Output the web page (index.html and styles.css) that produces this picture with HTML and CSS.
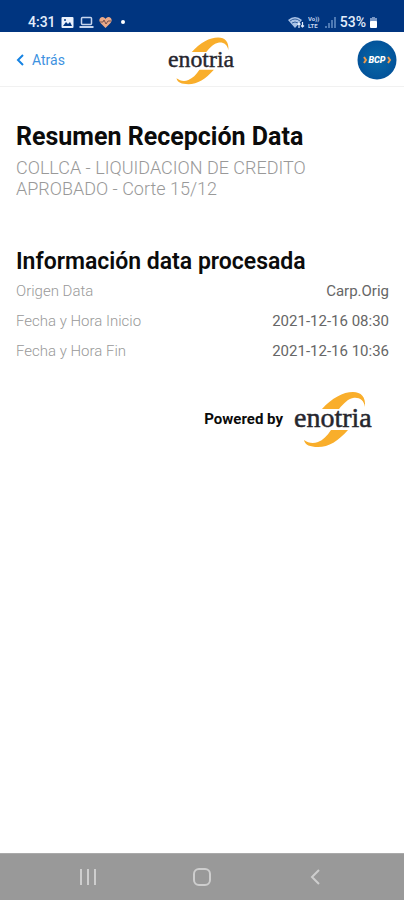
FILE: index.html
```
<!DOCTYPE html>
<html lang="es">
<head>
<meta charset="utf-8">
<meta name="viewport" content="width=device-width, initial-scale=1">
<title>Resumen Recepción Data</title>
<link rel="stylesheet" href="styles.css">
</head>
<body>
<div class="status">
  <div class="status-group">
    <span class="clock">4:31</span>
    <svg width="13" height="13" viewBox="0 0 13 13" aria-hidden="true"><rect x="0.5" y="1" width="12" height="11" rx="1" fill="#eaf1fc"/><path d="M2 10L5 6L7 8L9 6L11 10Z" fill="#003580"/><circle cx="4" cy="4" r="1" fill="#003580"/></svg>
    <svg width="15" height="13" viewBox="0 0 15 13" fill="none" stroke="#c5d5ee" aria-hidden="true"><rect x="2.5" y="1.5" width="10" height="7" rx="1" stroke-width="1.5"/><path d="M0.5 11H14.5" stroke-width="2"/></svg>
    <svg width="13" height="13" viewBox="0 0 13 13" aria-hidden="true"><path d="M6.500 12L1.500 7C-1 4 1 1 3.500 1C5 1 6 2 6.500 3C7 2 8 1 9.500 1C12 1 14 4 11.500 7Z" fill="#eba988"/><path d="M1 6H4L5 4L7 8L9 5H12" fill="none" stroke="#77524f"/></svg>
    <span class="dot"></span>
  </div>
  <div class="status-group status-right">
    <svg width="17" height="13" viewBox="0 0 17 13" aria-hidden="true"><path d="M0 4Q7 -2 14 4L7 12Z" fill="#a9c2e6"/><path d="M2 5Q7 1 12 5M4 7Q7 5 10 7" fill="none" stroke="#003580" stroke-width=".7"/><path d="M11 12V7M9.500 8.500L11 7L12.500 8.500M14.500 6V11M13 9.500L14.500 11L16 9.500" fill="none" stroke="#e3edfb" stroke-width="1.200"/></svg>
    <svg class="volte" width="13" height="14" viewBox="0 0 13 14" aria-hidden="true"><text x="0" y="6">Vo))</text><text x="0" y="13">LTE</text></svg>
    <svg width="13" height="13" viewBox="0 0 13 13" fill="#4d79b4" aria-hidden="true"><path d="M1 10H3V12H1ZM4 7H6V12H4ZM7 4H9V12H7ZM10 1H12V12H10Z"/></svg>
    <span class="battery">53%</span>
    <svg width="9" height="13" viewBox="0 0 9 13" aria-hidden="true"><path d="M3 1H6V2H8V6H1V2H3Z" fill="#7795c5"/><rect x="1" y="5" width="7" height="7" rx="1" fill="#fff"/></svg>
  </div>
</div>
<header class="topbar">
  <a class="back" href="#"><svg width="8" height="12" viewBox="0 0 8 12" aria-hidden="true"><path d="M7 1L2 6L7 11" fill="none" stroke="#1683e3" stroke-width="2"/></svg>Atrás</a>
  <svg class="logo-small" viewBox="0 0 80 60" role="img" aria-label="enotria">
    <path fill="#f9ae2b" d="M28 20C38 9 49 3 59 3C67 3 72 8 71 18C70 11 65 8 59 9C54 10 50 14 45 20Z"/>
    <path fill="#f9ae2b" d="M54 41C44 52 35 58 24 58C16 58 11 56 10 51C14 54 19 55 24 53C29 51 33 47 37 41Z"/>
    <text class="wordmark" x="0" y="38">enotria</text>
  </svg>
  <svg class="bcp" width="40" height="40" viewBox="0 0 40 40" role="img" aria-label="BCP">
    <defs><radialGradient id="disc"><stop offset="0" stop-color="#0868a8"/><stop offset="1" stop-color="#03539a"/></radialGradient></defs>
    <circle cx="20" cy="20" r="19.500" fill="url(#disc)"/>
    <path d="M7 17L9 20L7 23M31 17L33 20L31 23" fill="none" stroke="#ed9a4b" stroke-width="2"/>
    <text x="20" y="23" text-anchor="middle">BCP</text>
  </svg>
</header>
<main>
  <h1>Resumen Recepción Data</h1>
  <p class="subtitle">COLLCA - LIQUIDACION DE CREDITO APROBADO - Corte 15/12</p>
  <h2>Información data procesada</h2>
  <dl>
    <div><dt>Origen Data</dt><dd>Carp.Orig</dd></div>
    <div><dt>Fecha y Hora Inicio</dt><dd>2021-12-16 08:30</dd></div>
    <div><dt>Fecha y Hora Fin</dt><dd>2021-12-16 10:36</dd></div>
  </dl>
  <div class="powered"><span>Powered by</span><svg class="logo-large" viewBox="0 0 80 60" role="img" aria-label="enotria">
    <path fill="#f9ae2b" d="M28 20C38 9 49 3 59 3C67 3 72 8 71 18C70 11 65 8 59 9C54 10 50 14 45 20Z"/>
    <path fill="#f9ae2b" d="M54 41C44 52 35 58 24 58C16 58 11 56 10 51C14 54 19 55 24 53C29 51 33 47 37 41Z"/>
    <text class="wordmark" x="0" y="38">enotria</text>
  </svg></div>
</main>
<nav class="system" aria-label="Sistema">
  <button aria-label="Recientes"><svg width="20" height="20" viewBox="0 0 20 20"><path d="M2 2V18M9 2V18M16 2V18"/></svg></button>
  <button aria-label="Inicio"><svg width="20" height="20" viewBox="0 0 20 20"><rect x="2" y="2" width="16" height="16" rx="5"/></svg></button>
  <button aria-label="Volver"><svg width="20" height="20" viewBox="0 0 20 20"><path d="M14 3L7 10L14 17"/></svg></button>
</nav>
</body>
</html>
```
FILE: styles.css
```
* { box-sizing: border-box; }
body {
  margin: 0;
  min-height: 100vh;
  display: flex;
  flex-direction: column;
  background: #fff;
  color: #0b0b0b;
  font-family: Roboto, "Liberation Sans", sans-serif;
}
svg { flex: none; display: block; }
.wordmark { font-family: "Liberation Serif", serif; font-size: 28px; font-weight: 400; fill: #26262e; stroke: #26262e; stroke-width: 0.5px; }
.status {
  display: flex;
  justify-content: space-between;
  height: 32px;
  padding: 12px 26px 0 28px;
  background: #003580;
  color: #e3edfb;
}
.status-group { display: flex; align-items: center; gap: 5px; height: 20px; }
.status-right { gap: 3px; }
.clock, .battery { font-size: 14px; line-height: 20px; font-weight: 500; }
.dot { width: 4px; height: 4px; margin-left: 4px; border-radius: 50%; background: #fff; }
.volte text { font-size: 6px; font-weight: 700; fill: #c5d5ee; }
.topbar {
  display: grid;
  grid-template-columns: 1fr auto 1fr;
  align-items: center;
  height: 55px;
  padding: 2px 7px 0;
  border-bottom: 1px solid #f1f1f1;
}
.back { display: flex; align-items: center; gap: 8px; padding-left: 9px; color: #3e92df; font-size: 14px; line-height: 20px; text-decoration: none; }
.logo-small { width: 68px; height: 51px; }
.bcp { justify-self: end; }
.bcp text { font-size: 9px; font-weight: 900; font-style: italic; fill: #fff; }
main { flex: 1; padding: 34px 15px 0 16px; }
h1, h2, p, dl, dd { margin: 0; }
h1 { font-size: 25px; line-height: 32px; font-weight: 700; }
.subtitle { margin-top: 4px; color: #999; font-size: 18px; line-height: 21px; font-weight: 300; }
h2 { margin-top: 49px; font-size: 23px; line-height: 28px; font-weight: 600; }
dl div { display: flex; justify-content: space-between; height: 30px; align-items: center; font-size: 15px; }
dt { color: #999; font-weight: 300; }
dd { color: #666; }
.powered { display: flex; justify-content: flex-end; align-items: center; gap: 11px; margin-top: 23px; font-size: 15px; font-weight: 700; }
.logo-large { width: 80px; height: 60px; margin-right: 15px; }
.system { display: flex; justify-content: space-between; height: 47px; padding: 0 79px; background: #999; border-top: 1px solid #aaa; }
.system button { display: flex; align-items: center; padding: 0; border: 0; background: none; }
.system svg { fill: none; stroke: #cecece; stroke-width: 2; }
```
